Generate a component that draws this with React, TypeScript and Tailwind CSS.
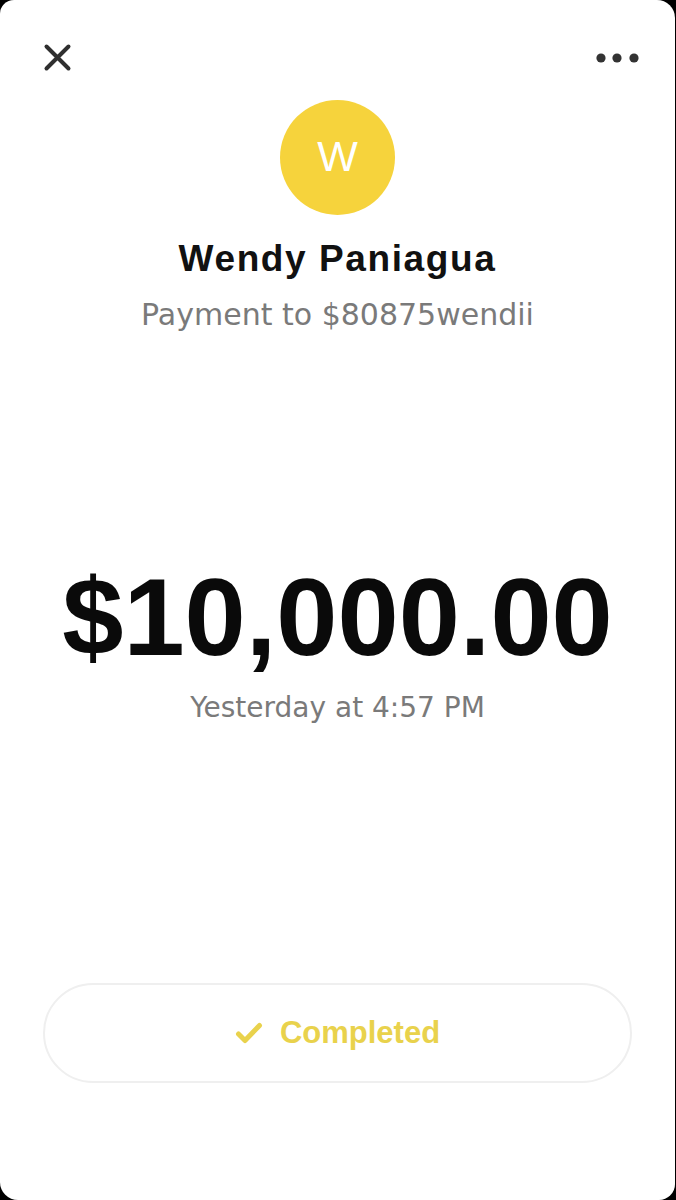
import React from "react";

export default function App() {
  return (
    <div className="w-[676px] h-[1200px] bg-black overflow-hidden">
      <div className="w-[675px] h-[1200px] bg-white rounded-tl-[14px] rounded-tr-[18px] rounded-bl-[18px] rounded-br-[16px] flex flex-col">
        {/* header */}
        <div className="flex items-center justify-between pt-[43px] pl-[43px] pr-[36px]">
          <svg width="29" height="29" viewBox="0 0 29 29" fill="none">
            <path d="M3.5 3.5 L25.5 25.5 M25.5 3.5 L3.5 25.5" stroke="#2f2f2f" strokeWidth="4" strokeLinecap="round" />
          </svg>
          <svg width="44" height="10" viewBox="0 0 44 10" fill="#333333">
            <circle cx="6" cy="5" r="4.6" />
            <circle cx="22" cy="5" r="4.6" />
            <circle cx="39" cy="5" r="4.6" />
          </svg>
        </div>

        {/* avatar */}
        <div className="flex justify-center mt-[28px]">
          <div className="w-[115px] h-[115px] rounded-full bg-[#f6d33c] flex items-center justify-center">
            <span className="text-white text-[43px] leading-none font-normal font-['Liberation_Sans',sans-serif] pb-[2px]">
              W
            </span>
          </div>
        </div>

        {/* name */}
        <div className="mt-[24px] text-center text-[37px] leading-[40px] font-bold tracking-[1.6px] text-[#111111] font-['Liberation_Sans',sans-serif]">
          Wendy Paniagua
        </div>
        <div className="mt-[18px] text-center text-[30px] leading-[36px] text-[#7a7a7a] font-['DejaVu_Sans',sans-serif]">
          Payment to $80875wendii
        </div>

        {/* amount */}
        <div className="mt-[224px] text-center text-[110px] leading-[120px] font-bold text-[#0a0a0a] font-['Liberation_Sans',sans-serif]">
          $10,000.00
        </div>
        <div className="mt-[14px] text-center text-[28px] leading-[34px] text-[#7a7a7a] font-['DejaVu_Sans',sans-serif]">
          Yesterday at 4:57 PM
        </div>

        {/* status pill */}
        <div className="mt-[258px] px-[43px]">
          <div className="h-[100px] rounded-full border-2 border-[#efefef] flex items-center justify-center gap-[17px]">
            <svg width="28" height="22" viewBox="0 0 28 22" fill="none">
              <path d="M3.5 12 L10 18.5 L24.5 3.5" stroke="#e9d24c" strokeWidth="5" strokeLinecap="round" strokeLinejoin="round" />
            </svg>
            <span className="text-[31px] leading-none font-bold text-[#e9d24c] font-['Liberation_Sans',sans-serif] pb-[2px]">
              Completed
            </span>
          </div>
        </div>
      </div>
    </div>
  );
}
